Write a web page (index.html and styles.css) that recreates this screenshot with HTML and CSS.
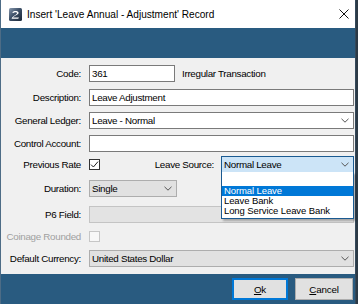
FILE: index.html
```html
<!DOCTYPE html>
<html>
<head>
<meta charset="utf-8">
<link rel="stylesheet" href="styles.css">
</head>
<body>
<div class="window">
  <div class="titlebar">
    <svg class="app-icon" viewBox="0 0 13 13" width="13" height="13">
      <defs>
        <linearGradient id="ig" x1="0" y1="0" x2="1" y2="1">
          <stop offset="0" stop-color="#8a9bb0"/>
          <stop offset="0.45" stop-color="#3d5068"/>
          <stop offset="1" stop-color="#1b2838"/>
        </linearGradient>
      </defs>
      <rect x="0" y="0" width="13" height="13" rx="1.5" fill="url(#ig)"/>
      <path d="M3.2 4.6 C3.6 2.6 9.6 2.4 9.6 4.8 C9.6 6.6 6 7.4 4 9.4 L10 9.4 L9.2 10.8 L2.6 10.8 C3.2 8 8 6.8 8 5 C8 3.8 5 3.9 4.6 4.9 Z" fill="#fff"/>
    </svg>
    <span class="title">Insert 'Leave Annual - Adjustment' Record</span>
    <svg class="close" viewBox="0 0 10 10" width="10" height="10">
      <path d="M0.5 0.5 L9.5 9.5 M9.5 0.5 L0.5 9.5" stroke="#111" stroke-width="1" fill="none"/>
    </svg>
  </div>
  <div class="band"></div>
  <div class="form">
    <div class="row r-code">
      <span class="label">Code:</span>
      <div class="field code-field">361</div>
      <span class="note">Irregular Transaction</span>
    </div>
    <div class="row r-desc">
      <span class="label">Description:</span>
      <div class="field">Leave Adjustment</div>
    </div>
    <div class="row r-gl">
      <span class="label">General Ledger:</span>
      <div class="field combo">
        <span class="combo-text">Leave - Normal</span>
        <svg class="chev" viewBox="0 0 8 5" width="8" height="5"><path d="M0.5 0.8 L4 4.2 L7.5 0.8" stroke="#555" stroke-width="1" fill="none"/></svg>
      </div>
    </div>
    <div class="row r-ctrl">
      <span class="label">Control Account:</span>
      <div class="field"></div>
    </div>
    <div class="row r-leave">
      <span class="label">Previous Rate</span>
      <span class="check">
        <svg viewBox="0 0 11 11" width="11" height="11"><path d="M2 5.6 L4.4 8 L9 2.6" stroke="#222" stroke-width="1" fill="none"/></svg>
      </span>
      <span class="label-inline">Leave Source:</span>
      <div class="field combo combo-open">
        <span class="combo-text">Normal Leave</span>
        <svg class="chev" viewBox="0 0 8 5" width="8" height="5"><path d="M0.5 0.8 L4 4.2 L7.5 0.8" stroke="#555" stroke-width="1" fill="none"/></svg>
      </div>
    </div>
    <div class="row r-dur">
      <span class="label">Duration:</span>
      <div class="field combo combo-list dur-field">
        <span class="combo-text">Single</span>
        <svg class="chev" viewBox="0 0 8 5" width="8" height="5"><path d="M0.5 0.8 L4 4.2 L7.5 0.8" stroke="#555" stroke-width="1" fill="none"/></svg>
      </div>
    </div>
    <div class="row r-p6">
      <span class="label">P6 Field:</span>
      <div class="field disabled"></div>
    </div>
    <div class="row r-coin">
      <span class="label label-disabled">Coinage Rounded</span>
      <span class="check check-disabled"></span>
    </div>
    <div class="row r-cur">
      <span class="label">Default Currency:</span>
      <div class="field combo combo-list">
        <span class="combo-text">United States Dollar</span>
        <svg class="chev" viewBox="0 0 8 5" width="8" height="5"><path d="M0.5 0.8 L4 4.2 L7.5 0.8" stroke="#555" stroke-width="1" fill="none"/></svg>
      </div>
    </div>
  </div>
  <div class="footer">
    <button class="btn btn-default"><u>O</u>k</button>
    <button class="btn btn-cancel"><u>C</u>ancel</button>
  </div>
  <div class="dropdown">
    <div class="dd-item dd-empty"></div>
    <div class="dd-item dd-selected">Normal Leave</div>
    <div class="dd-item">Leave Bank</div>
    <div class="dd-item">Long Service Leave Bank</div>
  </div>
</div>
</body>
</html>
```
FILE: styles.css
```css
* { box-sizing: border-box; }
html, body { margin: 0; padding: 0; }
body {
  width: 358px;
  height: 304px;
  overflow: hidden;
  background: #2c3a46;
  font-family: "Liberation Sans", Arial, sans-serif;
  font-size: 9.8px;
  letter-spacing: -0.3px;
  color: #000;
}
.window {
  position: relative;
  width: 356px;
  height: 304px;
  border-left: 1px solid #4d6c86;
  border-right: 1px solid #34495b;
  display: flex;
  flex-direction: column;
  background: #295b80;
}
.titlebar {
  height: 28px;
  flex: none;
  background: #fff;
  display: flex;
  align-items: center;
  padding-left: 8px;
}
.app-icon { flex: none; display: block; }
.title {
  margin-left: 5px;
  font-size: 10.1px;
  letter-spacing: 0;
  color: #000;
}
.close { margin-left: auto; margin-right: 6px; flex: none; display: block; }
.band { height: 30px; flex: none; background: #295b80; }
.form {
  flex: none;
  background: #f0f0f0;
  padding: 7px 1px 7px 0;
  display: flex;
  flex-direction: column;
}
.row { display: flex; align-items: center; height: 17px; flex: none; }
.r-desc { margin-top: 7px; }
.r-gl { margin-top: 6px; }
.r-ctrl { margin-top: 6px; }
.r-leave { margin-top: 4px; }
.r-dur { margin-top: 7px; }
.r-p6 { margin-top: 9px; }
.r-coin { margin-top: 7px; height: 12px; }
.r-cur { margin-top: 8px; }
.label {
  width: 80px;
  flex: none;
  text-align: right;
  margin-right: 8px;
  white-space: nowrap;
}
.label-disabled { color: #a0a0a0; }
.field {
  flex: 1;
  height: 17px;
  border: 1px solid #7a7a7a;
  background: #fff;
  padding-left: 2px;
  display: flex;
  align-items: center;
  white-space: nowrap;
}
.code-field { flex: none; width: 86px; }
.note { margin-left: 7px; white-space: nowrap; }
.combo { padding-right: 4px; }
.combo-text { flex: 1; }
.chev { flex: none; display: block; }
.combo-list { background: #e1e1e1; border-color: #adadad; }
.combo-open {
  flex: none;
  width: 133px;
  background: #cce4f7;
  border-color: #1a5a91;
}
.dur-field { flex: none; width: 88px; }
.disabled { background: #e3e3e3; border-color: #c4c4c4; }
.check {
  flex: none;
  width: 11px;
  height: 11px;
  border: 1px solid #333;
  background: #fff;
  display: flex;
  align-items: center;
  justify-content: center;
}
.check svg { display: block; flex: none; }
.check-disabled { border-color: #c6c6c6; background: #f7f7f7; }
.label-inline { margin-left: auto; margin-right: 7px; white-space: nowrap; }
.footer {
  flex: 1;
  display: flex;
  justify-content: flex-end;
  align-items: flex-start;
  padding: 4px 2px 0 0;
  gap: 7px;
  background: #295b80;
}
.btn {
  height: 22px;
  margin: 0;
  padding: 0;
  background: #e1e1e1;
  border: 1px solid #adadad;
  font-family: "Liberation Sans", Arial, sans-serif;
  font-size: 9.8px;
  letter-spacing: -0.2px;
  color: #000;
}
.btn-default { width: 56px; border: 2px solid #0078d7; }
.btn-cancel { width: 58px; }
.dropdown {
  position: absolute;
  left: 220px;
  top: 172px;
  width: 133px;
  height: 47px;
  background: #fff;
  border: 1px solid #1a5a91;
  border-top: none;
  box-shadow: 2px 2px 2px rgba(0, 0, 0, 0.28);
  padding-top: 1px;
  font-size: 9.5px;
  letter-spacing: -0.1px;
}
.dd-item {
  height: 10px;
  line-height: 10px;
  padding-left: 2px;
  white-space: nowrap;
}
.dd-empty { height: 13px; }
.dd-selected { background: #0078d7; color: #fff; }
```
